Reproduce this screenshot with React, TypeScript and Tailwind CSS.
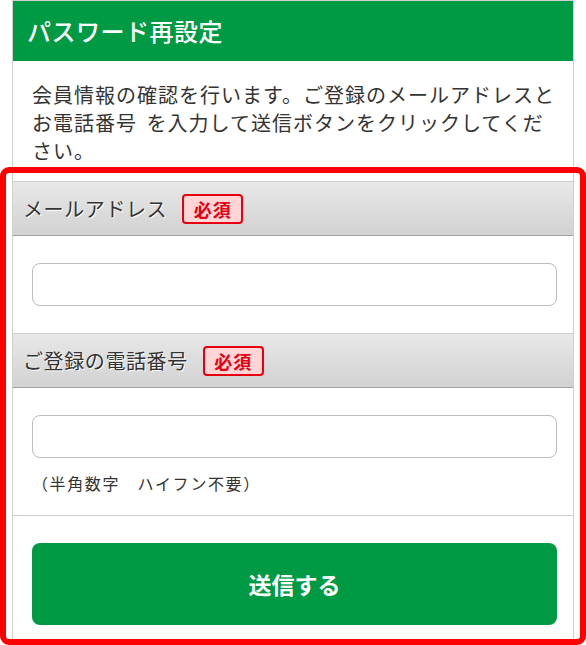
import React from "react";

const jp = { fontFamily: '"Noto Sans CJK JP", "Noto Sans", sans-serif' };

function Badge() {
  return (
    <span className="ml-[15px] inline-flex h-[30px] w-[61px] items-center justify-center rounded-[4px] border-2 border-[#e60012] bg-[#ffd5d5] text-[18px] font-bold leading-none tracking-[1px] text-[#e60012] [text-shadow:none]">
      必須
    </span>
  );
}

function SectionHeader({ label }: { label: string }) {
  return (
    <div className="flex h-[55px] items-center border-t border-b border-t-[#cfcfcf] border-b-[#a0a0a0] bg-gradient-to-b from-[#e8e8e8] to-[#d2d2d2] pl-[10px]">
      <span className="text-[20px] leading-none tracking-[0.6px] text-[#333] [text-shadow:1px_1px_0_#fff]">{label}</span>
      <Badge />
    </div>
  );
}

export default function App() {
  return (
    <div className="relative h-[645px] w-[586px] overflow-hidden bg-white" style={jp}>
      <div className="mx-[12px] flex h-[660px] flex-col border border-[#d0d0d0] border-b-0">
        <div className="flex h-[60px] items-center bg-[#009944] pl-[14px]">
          <h1 className="text-[24px] font-medium leading-none tracking-[0.5px] text-white">パスワード再設定</h1>
        </div>
        <p className="pl-[19px] pr-[13px] pt-[20px] pb-[16px] text-[20px] leading-[28px] tracking-[1px] text-[#333] [word-spacing:4px]">
          会員情報の確認を行います。ご登録のメールアドレスとお電話番号 を入力して送信ボタンをクリックしてください。
        </p>
        <SectionHeader label="メールアドレス" />
        <div className="pl-[19px] pr-[16px] py-[27px]">
          <input className="block h-[43px] w-full rounded-[8px] border-[1.5px] border-[#bdbdbd] bg-white px-3 outline-none" />
        </div>
        <SectionHeader label="ご登録の電話番号" />
        <div className="border-b border-[#d0d0d0] pl-[19px] pr-[16px] pt-[27px] pb-[20px]">
          <input className="block h-[43px] w-full rounded-[8px] border-[1.5px] border-[#bdbdbd] bg-white px-3 outline-none" />
          <p className="mt-[13px] text-[16px] leading-[24px] tracking-[1.6px] text-[#333]">（半角数字　ハイフン不要）</p>
        </div>
        <div className="pl-[19px] pr-[16px] pt-[27px]">
          <button className="flex h-[82px] w-full items-center justify-center rounded-[8px] bg-[#009944] text-[23px] font-bold text-white">
            送信する
          </button>
        </div>
      </div>
      <div className="pointer-events-none absolute left-0 top-[167px] h-[478px] w-[586px] rounded-[9px] border-[6px] border-[#ff0000]" />
    </div>
  );
}
